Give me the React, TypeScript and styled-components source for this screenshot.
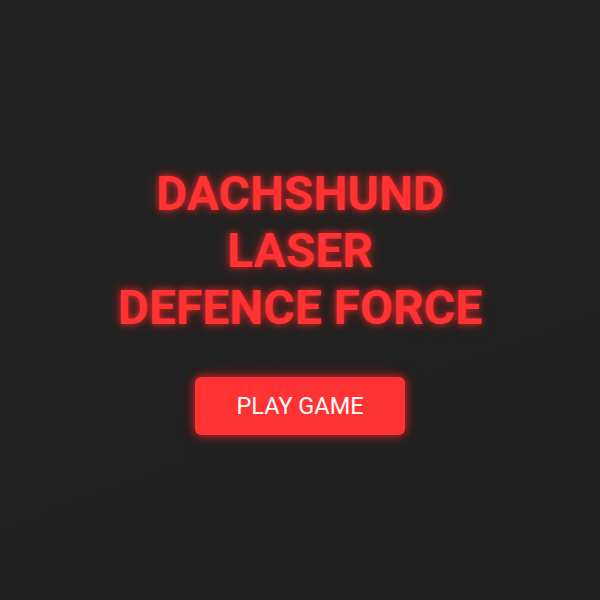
import React from 'react';
import styled, { createGlobalStyle } from 'styled-components';

const GlobalStyle = createGlobalStyle`
  html, body {
    margin: 0;
    padding: 0;
    background: #222222;
  }
  * {
    box-sizing: border-box;
  }
`;

const Screen = styled.div`
  width: 600px;
  height: 600px;
  display: flex;
  flex-direction: column;
  align-items: center;
  justify-content: center;
  background: linear-gradient(160deg, #242424 0%, #212121 60%, #1f1f1f 100%);
  font-family: Roboto, 'Liberation Sans', sans-serif;
`;

const Title = styled.h1`
  margin: 0 0 41px;
  font-size: 48px;
  line-height: 57px;
  font-weight: 700;
  text-align: center;
  color: #ff3333;
  text-shadow: 0 0 6px rgba(255, 40, 40, 0.8), 0 0 14px rgba(255, 30, 30, 0.45);
`;

const PlayButton = styled.button`
  width: 210px;
  height: 58px;
  border: none;
  border-radius: 6px;
  background: #ff3333;
  color: #ffffff;
  font-family: inherit;
  font-size: 23.5px;
  font-weight: 400;
  cursor: pointer;
  box-shadow: 0 0 8px rgba(255, 40, 40, 0.75), 0 0 16px rgba(255, 30, 30, 0.35);
`;

export default function App() {
  return (
    <>
      <GlobalStyle />
      <Screen>
        <Title>
          DACHSHUND
          <br />
          LASER
          <br />
          DEFENCE FORCE
        </Title>
        <PlayButton>PLAY GAME</PlayButton>
      </Screen>
    </>
  );
}
